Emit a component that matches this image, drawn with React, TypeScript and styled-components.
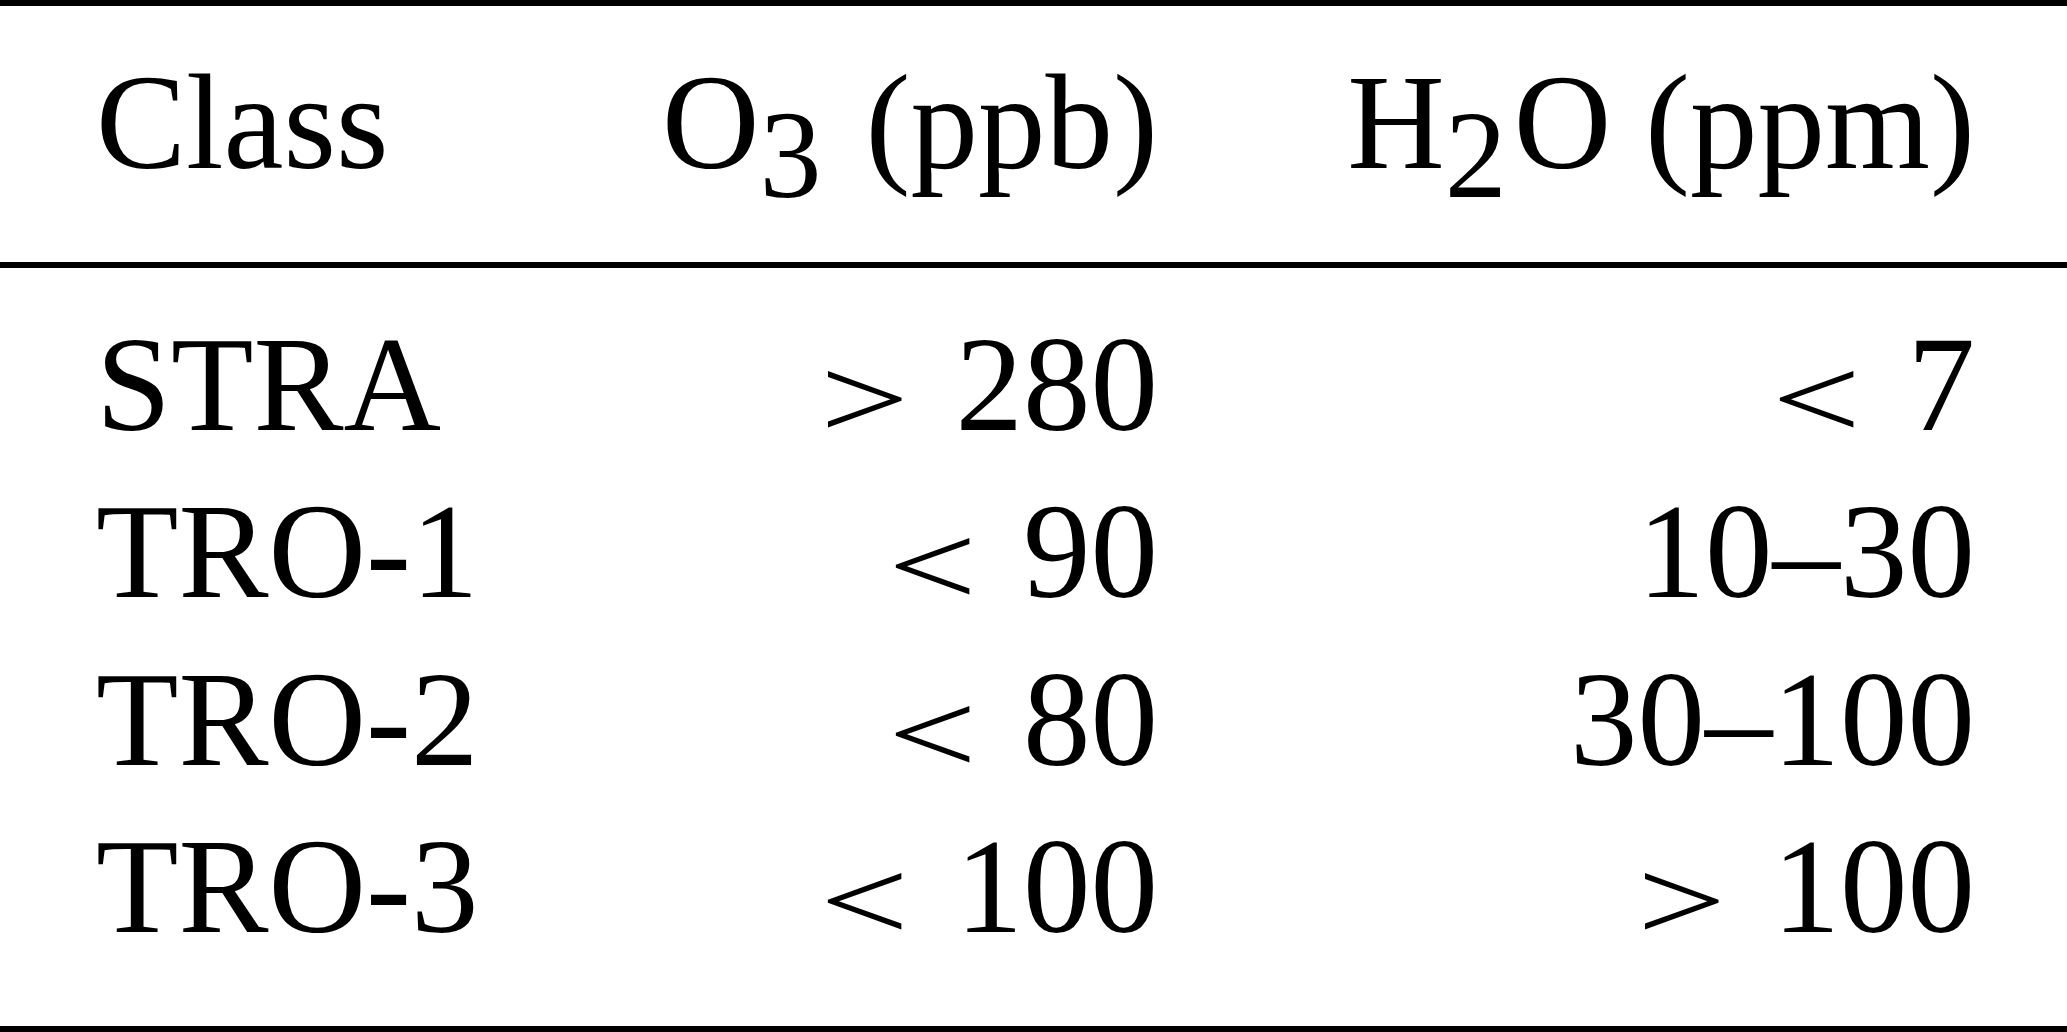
import styled, { createGlobalStyle } from "styled-components";

const GlobalStyle = createGlobalStyle`
  html, body {
    margin: 0;
    padding: 0;
    background: #ffffff;
  }
  body {
    font-family: "Liberation Serif", "Times New Roman", serif;
    color: #000000;
  }
`;

type Row = {
  name: string;
  o3: [string, string];
  h2o: [string, string];
};

// relation sign + value, empty sign means a plain range
const rows: Row[] = [
  { name: "STRA", o3: [">", "280"], h2o: ["<", "7"] },
  { name: "TRO-1", o3: ["<", "90"], h2o: ["", "10–30"] },
  { name: "TRO-2", o3: ["<", "80"], h2o: ["", "30–100"] },
  { name: "TRO-3", o3: ["<", "100"], h2o: [">", "100"] },
];

const App = () => {
  return (
    <>
      <GlobalStyle />
      <Table>
        <Rule />
        <Section>
          <TableRow>
            <Cell>Class</Cell>
            <Cell $align="right">
              O<Sub>3</Sub>
              <Gap $w={44} />
              (ppb)
            </Cell>
            <Cell $align="right">
              H<Sub $after={7}>2</Sub>O (ppm)
            </Cell>
          </TableRow>
        </Section>
        <Rule />
        <Section>
          {rows.map((row) => (
            <TableRow key={row.name}>
              <Cell>{row.name}</Cell>
              <Cell $align="right">
                <Value sign={row.o3[0]} text={row.o3[1]} />
              </Cell>
              <Cell $align="right">
                <Value sign={row.h2o[0]} text={row.h2o[1]} />
              </Cell>
            </TableRow>
          ))}
        </Section>
        <Rule />
      </Table>
    </>
  );
};

const Value = ({ sign, text }: { sign: string; text: string }) => (
  <>
    {sign && <Relation>{sign}</Relation>}
    {text}
  </>
);

const Table = styled.div`
  width: 2067px;
  height: 1032px;
  background: #ffffff;
  overflow: hidden;
`;

const Rule = styled.div`
  height: 6px;
  background: #000000;
`;

const Section = styled.div`
  padding: 33px 0 55px;
`;

const TableRow = styled.div`
  display: grid;
  grid-template-columns: 400px 662px 817px;
  padding-left: 96px;
  height: 167.5px;
  font-size: 135px;
  line-height: 167.5px;
  white-space: nowrap;
`;

const Cell = styled.div<{ $align?: "left" | "right" }>`
  text-align: ${({ $align }) => $align ?? "left"};
`;

const Sub = styled.span<{ $after?: number }>`
  font-size: 0.92em;
  line-height: 0;
  vertical-align: -29px;
  margin-right: ${({ $after }) => $after ?? 0}px;
`;

const Gap = styled.span<{ $w: number }>`
  display: inline-block;
  width: ${({ $w }) => $w}px;
`;

const Relation = styled.span`
  display: inline-block;
  line-height: 1;
  margin-right: 46px;
  transform: translateY(8px) scale(1.17, 0.86);
  transform-origin: 100% 0.8375em;
`;

export default App;
